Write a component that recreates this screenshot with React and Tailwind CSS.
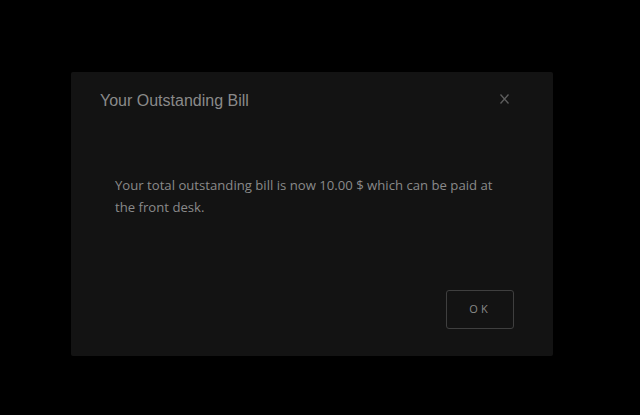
import React from 'react'

const App = () => {
    return (
        <div className="w-[640px] h-[415px] bg-black pt-[72px] pl-[71px]">
            <div className="w-[482px] h-[284px] bg-[#131313] rounded-[2px] flex flex-col">
                <div className="flex items-start justify-between pl-[29px] pr-[44px] pt-[19px]">
                    <h2 className="text-[16px] leading-[20px] text-[#8a8a8a] font-['Liberation_Sans',Arial,sans-serif]">Your Outstanding Bill</h2>
                    <button className="mt-[3px] w-[9px] h-[10px] text-[#5e5e5e]">
                        <svg width="9" height="10" viewBox="0 0 9 10" fill="none" stroke="currentColor" strokeWidth="1.3">
                            <path d="M0.5 0.5 L8.5 9.5 M8.5 0.5 L0.5 9.5" />
                        </svg>
                    </button>
                </div>

                <p className="mt-[63px] pl-[44px] pr-[44px] text-[13.15px] leading-[22px] text-[#8a8a8a] font-['Open_Sans',sans-serif]">
                    Your total outstanding bill is now 10.00 $ which can be paid at the front desk.
                </p>

                <div className="mt-auto flex justify-end pr-[39px] pb-[27px]">
                    <button className="w-[68px] h-[39px] rounded-[3px] border border-[#3f3f3f] text-[11px] tracking-[3px] text-[#8a8a8a] font-['Open_Sans',sans-serif]">
                        OK
                    </button>
                </div>
            </div>
        </div>
    )
}

export default App
